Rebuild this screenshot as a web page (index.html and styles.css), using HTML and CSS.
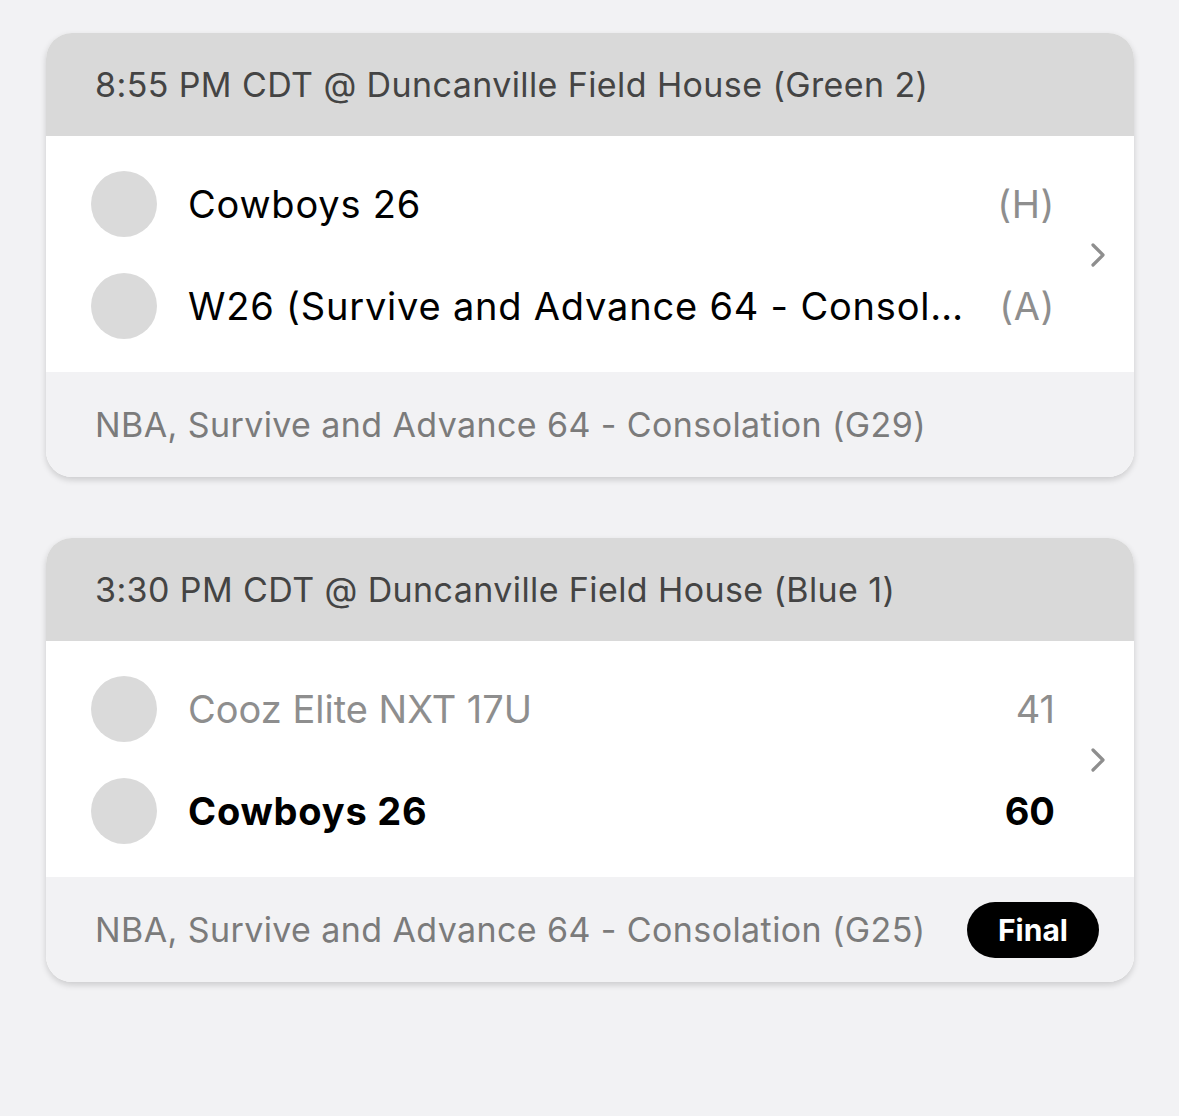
FILE: index.html
```html
<!DOCTYPE html>
<html lang="en">
<head>
    <meta charset="UTF-8">
    <meta name="viewport" content="width=device-width, initial-scale=1.0">
    <title>Games</title>
    <link rel="stylesheet" href="styles.css">
</head>
<body>
    <div class="game-list">
        <!-- Upcoming game -->
        <div class="game-card">
            <div class="game-header">8:55 PM CDT @ Duncanville Field House (Green 2)</div>
            <div class="game-body">
                <div class="teams">
                    <div class="team-row">
                        <span class="team-logo"></span>
                        <span class="team-name">Cowboys 26</span>
                        <span class="team-side">(H)</span>
                    </div>
                    <div class="team-row">
                        <span class="team-logo"></span>
                        <span class="team-name">W26 (Survive and Advance 64 - Consolation (G25))</span>
                        <span class="team-side">(A)</span>
                    </div>
                </div>
                <div class="chevron">
                    <svg width="16" height="26" viewBox="0 0 16 26"><path d="M3 3 L13 13 L3 23" fill="none" stroke="#8e8e8e" stroke-width="3.2" stroke-linecap="round" stroke-linejoin="round"/></svg>
                </div>
            </div>
            <div class="game-footer">
                <span class="game-info">NBA, Survive and Advance 64 - Consolation (G29)</span>
            </div>
        </div>

        <!-- Finished game -->
        <div class="game-card">
            <div class="game-header">3:30 PM CDT @ Duncanville Field House (Blue 1)</div>
            <div class="game-body">
                <div class="teams">
                    <div class="team-row loser">
                        <span class="team-logo"></span>
                        <span class="team-name">Cooz Elite NXT 17U</span>
                        <span class="team-score">41</span>
                    </div>
                    <div class="team-row winner">
                        <span class="team-logo"></span>
                        <span class="team-name">Cowboys 26</span>
                        <span class="team-score">60</span>
                    </div>
                </div>
                <div class="chevron">
                    <svg width="16" height="26" viewBox="0 0 16 26"><path d="M3 3 L13 13 L3 23" fill="none" stroke="#8e8e8e" stroke-width="3.2" stroke-linecap="round" stroke-linejoin="round"/></svg>
                </div>
            </div>
            <div class="game-footer">
                <span class="game-info">NBA, Survive and Advance 64 - Consolation (G25)</span>
                <span class="status-pill">Final</span>
            </div>
        </div>
    </div>
</body>
</html>
```

FILE: styles.css
```css
* {
    margin: 0;
    padding: 0;
    box-sizing: border-box;
}

body {
    font-family: 'Inter', 'Noto Sans', sans-serif;
    background-color: #f2f2f4;
    color: #000;
    height: 1116px;
    overflow: hidden;
}

.game-list {
    display: flex;
    flex-direction: column;
    gap: 61px;
    padding: 33px 45px 0 46px;
}

.game-card {
    width: 1088px;
    border-radius: 26px;
    overflow: hidden;
    background-color: #fff;
    box-shadow: 0 3px 6px rgba(0, 0, 0, 0.16);
}

.game-header {
    height: 103px;
    display: flex;
    align-items: center;
    padding-left: 49px;
    background-color: #d9d9d9;
    color: #444;
    font-size: 34px;
    letter-spacing: 0.4px;
}

.game-body {
    display: flex;
    align-items: center;
    padding: 17px 0 15px;
}

.teams {
    flex: 1;
    min-width: 0;
    padding-left: 45px;
}

.team-row {
    height: 102px;
    display: flex;
    align-items: center;
}

.team-logo {
    flex: none;
    width: 66px;
    height: 66px;
    border-radius: 50%;
    background-color: #dadada;
    margin-right: 31px;
}

.team-name {
    flex: 1;
    min-width: 0;
    font-size: 38px;
    letter-spacing: 0.8px;
    white-space: nowrap;
    overflow: hidden;
    text-overflow: ellipsis;
}

.team-side {
    flex: none;
    margin-left: 22px;
    font-size: 38px;
    letter-spacing: 0.6px;
    color: #8e8e8e;
}

.team-score {
    flex: none;
    margin-left: 22px;
    font-size: 38px;
}

.loser .team-name,
.loser .team-score {
    color: #8e8e8e;
    letter-spacing: 0;
}

.winner .team-name,
.winner .team-score {
    font-weight: 700;
}

.chevron {
    flex: none;
    width: 79px;
    display: flex;
    justify-content: center;
    padding-left: 6px;
}

.game-footer {
    height: 105px;
    display: flex;
    align-items: center;
    justify-content: space-between;
    padding: 0 35px 0 49px;
    background-color: #f2f2f4;
}

.game-info {
    font-size: 34px;
    color: #7b7b7b;
    letter-spacing: 0.4px;
}

.status-pill {
    width: 132px;
    height: 56px;
    border-radius: 28px;
    background-color: #000;
    color: #fff;
    font-size: 30px;
    font-weight: 700;
    display: flex;
    align-items: center;
    justify-content: center;
}
```
